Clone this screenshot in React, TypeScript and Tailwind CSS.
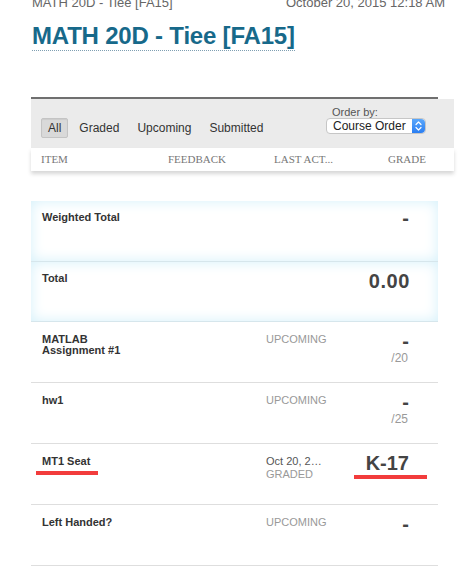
import React from 'react';

type Row = {
  name: string;
  status?: string;
  date?: string;
  grade: string;
  outOf?: string;
  marked?: boolean;
};

const rows: Row[] = [
  { name: 'MATLAB Assignment #1', status: 'UPCOMING', grade: '-', outOf: '/20' },
  { name: 'hw1', status: 'UPCOMING', grade: '-', outOf: '/25' },
  { name: 'MT1 Seat', date: 'Oct 20, 2…', status: 'GRADED', grade: 'K-17', marked: true },
  { name: 'Left Handed?', status: 'UPCOMING', grade: '-' },
];

function SelectArrows() {
  return (
    <div className="w-[13px] h-full rounded-r-[4px] bg-gradient-to-b from-[#5aa7fb] to-[#2a7ef2] flex items-center justify-center">
      <svg width="7" height="10" viewBox="0 0 7 10" fill="none">
        <path d="M1 3.5 L3.5 1 L6 3.5" stroke="white" strokeWidth="1.2" strokeLinecap="round" strokeLinejoin="round" />
        <path d="M1 6.5 L3.5 9 L6 6.5" stroke="white" strokeWidth="1.2" strokeLinecap="round" strokeLinejoin="round" />
      </svg>
    </div>
  );
}

function GradeRow({ row }: { row: Row }) {
  return (
    <div className="h-[61px] border-b border-[#dedede] flex pl-[11px] pr-[29px] pt-[12px]">
      <div className="w-[100px] relative">
        <div className="text-[11px] leading-[11px] font-bold text-[#333]">{row.name}</div>
        {row.marked && (
          <div className="absolute left-[-6px] top-[15px] w-[62px] h-[4px] bg-[#f23c3c]" />
        )}
      </div>
      <div className="ml-[124px] text-[11px] leading-[13px] mt-[-1px]">
        {row.date && <div className="text-[#555]">{row.date}</div>}
        <div className="text-[#999]">{row.status}</div>
      </div>
      <div className="ml-auto flex flex-col items-end relative mt-[-1px]">
        <div className="text-[20px] leading-[17px] font-bold text-[#444]">{row.grade}</div>
        {row.outOf && <div className="text-[12px] leading-[12px] text-[#999] mt-[2px] pr-[1px]">{row.outOf}</div>}
        {row.marked && (
          <div className="absolute right-[-18px] top-[20px] w-[73px] h-[4px] bg-[#f23c3c]" />
        )}
      </div>
    </div>
  );
}

export default function App() {
  return (
    <div className="w-[465px] h-[570px] overflow-hidden bg-white font-['Liberation_Sans',Arial,sans-serif]">
      <div className="mt-[-5px] flex justify-between pl-[32px] pr-[20px] text-[13px] leading-[15px] text-[#666]">
        <span>MATH 20D - Tiee [FA15]</span>
        <span>October 20, 2015 12:18 AM</span>
      </div>

      <div className="pl-[32px] mt-[12px]">
        <span className="inline-block text-[24px] leading-[28px] font-bold tracking-[-0.2px] text-[#17698a] border-b border-dotted border-[#7f9fb2]">
          MATH 20D - Tiee [FA15]
        </span>
      </div>

      <div className="ml-[31px] mt-[46px] w-[407px] h-[2px] bg-[#6f6f6f]" />

      <div className="ml-[31px] w-[423px] h-[49px] bg-[#ebebeb] flex pl-[10px] pr-[28px]">
        <div className="mt-[19px] h-[20px] flex items-center gap-[4px] text-[12px] text-[#333]">
          <div className="h-[20px] px-[6px] flex items-center bg-[#d9d9d9] border border-[#c4c4c4] rounded-[2px] shadow-[inset_0_1px_1px_rgba(0,0,0,0.06)]">All</div>
          <div className="px-[7px]">Graded</div>
          <div className="px-[7px]">Upcoming</div>
          <div className="px-[7px]">Submitted</div>
        </div>
        <div className="ml-auto pt-[7px] flex flex-col">
          <div className="pl-[6px] text-[11px] leading-[12px] text-[#555]">Order by:</div>
          <div className="w-[100px] h-[16px] bg-white border border-[#c6c6c6] rounded-[4px] flex items-center text-[12px] text-[#222]">
            <span className="pl-[6px] flex-1 leading-[14px]">Course Order</span>
            <SelectArrows />
          </div>
        </div>
      </div>

      <div className="ml-[31px] w-[423px] h-[23px] bg-white shadow-[0_3px_4px_rgba(0,0,0,0.16)] flex items-center font-['Liberation_Serif',serif] text-[11px] text-[#777] pl-[10px]">
        <span className="w-[127px]">ITEM</span>
        <span className="w-[106px]">FEEDBACK</span>
        <span className="w-[114px]">LAST ACT...</span>
        <span>GRADE</span>
      </div>

      <div className="ml-[31px] w-[407px] mt-[30px]">
        <div className="h-[61px] border-b border-[#d6e6ec] shadow-[inset_0_0_14px_#d4f0fa] flex pl-[11px] pr-[29px] pt-[10px]">
          <div className="text-[11px] leading-[13px] font-bold text-[#333]">Weighted Total</div>
          <div className="ml-auto text-[20px] leading-[17px] font-bold text-[#444] mt-[-1px]">-</div>
        </div>
        <div className="h-[60px] border-b border-[#d6e6ec] shadow-[inset_0_0_14px_#d4f0fa] flex pl-[11px] pr-[28px] pt-[10px]">
          <div className="text-[11px] leading-[13px] font-bold text-[#333]">Total</div>
          <div className="ml-auto text-[20px] leading-[17px] font-bold tracking-[0.6px] text-[#444] mt-[1px]">0.00</div>
        </div>
        {rows.map((r) => (
          <GradeRow key={r.name} row={r} />
        ))}
      </div>
    </div>
  );
}
